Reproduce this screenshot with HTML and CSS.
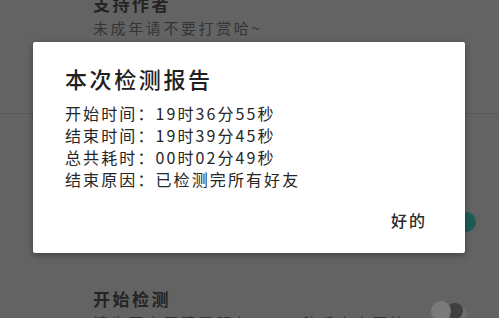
FILE: index.html
```html
<!DOCTYPE html>
<html lang="zh-CN">
<head>
<meta charset="utf-8">
<title>本次检测报告</title>
<link rel="stylesheet" href="styles.css">
</head>
<body>
<div class="screen">
  <div class="list">
    <div class="item item-top">
      <div class="item-title">支持作者</div>
      <div class="item-sub">未成年请不要打赏哈~</div>
    </div>
    <div class="divider"></div>
    <div class="item item-mid">
      <div class="item-text">
        <div class="item-title">自动检测</div>
        <div class="item-sub">检测完成后自动停止</div>
      </div>
      <div class="switch on"><span class="thumb"></span></div>
    </div>
    <div class="item item-bottom">
      <div class="item-text">
        <div class="item-title">开始检测</div>
        <div class="item-sub">请先开启无障碍服务，1~2秒后点击开始</div>
      </div>
      <div class="switch off"><span class="thumb"></span></div>
    </div>
  </div>

  <div class="dialog">
    <div class="dialog-title">本次检测报告</div>
    <div class="dialog-body">
      <div class="line">开始时间：19时36分55秒</div>
      <div class="line">结束时间：19时39分45秒</div>
      <div class="line">总共耗时：00时02分49秒</div>
      <div class="line">结束原因：已检测完所有好友</div>
    </div>
    <div class="dialog-actions">
      <span class="btn">好的</span>
    </div>
  </div>
</div>
</body>
</html>
```

FILE: styles.css
```css
* { box-sizing: border-box; }
html, body { margin: 0; padding: 0; }
body {
  font-family: "Noto Sans CJK SC", "Noto Sans", sans-serif;
  background: #636363;
}
.screen {
  position: relative;
  width: 499px;
  height: 318px;
  overflow: hidden;
  background: #636363;
}
.list {
  display: flex;
  flex-direction: column;
}
.item {
  display: flex;
  align-items: flex-start;
  padding-left: 93px;
  padding-right: 30px;
}
.item-text { flex: 1; }
.item-title {
  font-size: 17px;
  line-height: 20px;
  font-weight: 700;
  letter-spacing: 2.5px;
  color: #242424;
}
.item-sub {
  font-size: 15px;
  line-height: 20px;
  letter-spacing: 2.6px;
  color: #353535;
  margin-top: 4px;
}
.item-top {
  margin-top: -6px;
  height: 119px;
  flex-direction: column;
}
.divider {
  height: 1px;
  background: #595959;
}
.item-mid {
  height: 175px;
  padding-top: 90px;
}
.item-bottom {
  padding-top: 0;
}
.switch {
  position: relative;
  width: 40px;
  height: 18px;
  flex: none;
}
.item-mid .switch { margin-top: 10px; margin-right: -7px; }
.item-bottom .switch { margin-top: 14px; margin-right: -2px; }
.switch .thumb {
  position: absolute;
  top: -2px;
  width: 20px;
  height: 20px;
  border-radius: 50%;
}
.switch.on .thumb { right: 0; background: #1e5b55; }
.switch.off::before {
  content: "";
  position: absolute;
  left: 4px;
  right: 4px;
  top: 4px;
  height: 14px;
  border-radius: 7px;
  background: #6e6e6e;
}
.switch.off .thumb { left: 0; background: #7a7a7a; box-shadow: 14px 0 0 -2px #3f3f3f; }

.dialog {
  position: absolute;
  left: 33px;
  top: 42px;
  width: 432px;
  height: 211px;
  background: #ffffff;
  border-radius: 2px;
  box-shadow: 0 2px 6px rgba(0,0,0,0.35);
  padding: 22px 38px 0 32px;
  display: flex;
  flex-direction: column;
}
.dialog-title {
  font-size: 22px;
  line-height: 28px;
  font-weight: 500;
  letter-spacing: 2.6px;
  color: #202020;
}
.dialog-body {
  margin-top: 10px;
}
.line {
  font-size: 16px;
  line-height: 22px;
  letter-spacing: 2.1px;
  color: #262626;
}
.dialog-actions {
  display: flex;
  justify-content: flex-end;
  margin-top: 19px;
}
.btn {
  font-size: 16px;
  line-height: 22px;
  font-weight: 500;
  letter-spacing: 2px;
  color: #2a2a2a;
}
```
